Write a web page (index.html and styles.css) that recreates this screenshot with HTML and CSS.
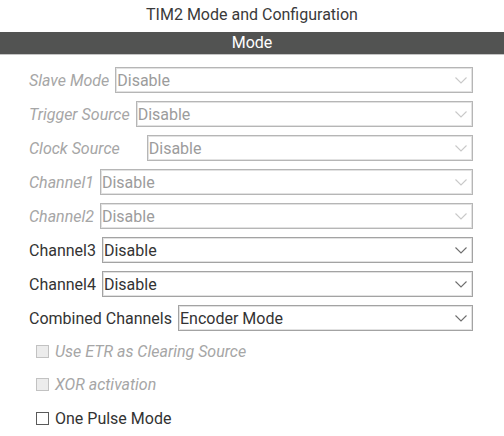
FILE: index.html
```html
<!DOCTYPE html>
<html lang="en">
<head>
  <meta charset="UTF-8">
  <title>TIM2 Mode and Configuration</title>
  <link rel="stylesheet" href="styles.css">
</head>
<body>
  <div class="title">TIM2 Mode and Configuration</div>
  <div class="bar">Mode</div>

  <div class="form">
    <div class="row off">
      <span class="label">Slave Mode</span>
      <div class="select">Disable<svg class="chev" viewBox="0 0 12 7"><path d="M0.5 0.5 L6 6 L11.5 0.5"/></svg></div>
    </div>
    <div class="row off">
      <span class="label">Trigger Source</span>
      <div class="select">Disable<svg class="chev" viewBox="0 0 12 7"><path d="M0.5 0.5 L6 6 L11.5 0.5"/></svg></div>
    </div>
    <div class="row off">
      <span class="label wide">Clock Source</span>
      <div class="select">Disable<svg class="chev" viewBox="0 0 12 7"><path d="M0.5 0.5 L6 6 L11.5 0.5"/></svg></div>
    </div>
    <div class="row off">
      <span class="label">Channel1</span>
      <div class="select">Disable<svg class="chev" viewBox="0 0 12 7"><path d="M0.5 0.5 L6 6 L11.5 0.5"/></svg></div>
    </div>
    <div class="row off">
      <span class="label">Channel2</span>
      <div class="select">Disable<svg class="chev" viewBox="0 0 12 7"><path d="M0.5 0.5 L6 6 L11.5 0.5"/></svg></div>
    </div>
    <div class="row">
      <span class="label">Channel3</span>
      <div class="select">Disable<svg class="chev" viewBox="0 0 12 7"><path d="M0.5 0.5 L6 6 L11.5 0.5"/></svg></div>
    </div>
    <div class="row">
      <span class="label">Channel4</span>
      <div class="select">Disable<svg class="chev" viewBox="0 0 12 7"><path d="M0.5 0.5 L6 6 L11.5 0.5"/></svg></div>
    </div>
    <div class="row">
      <span class="label">Combined Channels</span>
      <div class="select">Encoder Mode<svg class="chev" viewBox="0 0 12 7"><path d="M0.5 0.5 L6 6 L11.5 0.5"/></svg></div>
    </div>

    <div class="checks">
      <div class="check off"><span class="box"></span>Use ETR as Clearing Source</div>
      <div class="check off"><span class="box"></span>XOR activation</div>
      <div class="check"><span class="box"></span>One Pulse Mode</div>
    </div>
  </div>
</body>
</html>
```

FILE: styles.css
```css
body {
  margin: 0;
  font-family: Roboto, 'Liberation Sans', sans-serif;
  font-size: 16px;
  color: #333;
  background: #fff;
}

.title {
  height: 32px;
  line-height: 30px;
  text-align: center;
  color: #3a3a3a;
}

.bar {
  height: 22px;
  line-height: 22px;
  background: #525352;
  border-bottom: 1px solid #c4c4c4;
  color: #fff;
  text-align: center;
}

.form {
  padding: 12px 31px 0 29px;
}

.row {
  display: flex;
  align-items: center;
  height: 26px;
  margin-bottom: 8px;
}

.label {
  margin-right: 6px;
  white-space: nowrap;
}

.label.wide {
  margin-right: 27px;
}

.select {
  flex: 1;
  height: 26px;
  box-sizing: border-box;
  border: 1px solid #a3a3a3;
  box-shadow: inset 0 0 0 1px #e2e2e2;
  display: flex;
  align-items: center;
  justify-content: space-between;
  padding: 0 5px 0 1px;
  color: #333;
}

.chev {
  width: 12px;
  height: 7px;
  fill: none;
  stroke: #6e6e6e;
  stroke-width: 1.1;
}

.off .label {
  font-style: italic;
  color: #a6a6a6;
}

.off .select {
  color: #9c9c9c;
  border-color: #b6b6b6;
}

.off .chev {
  stroke: #c9c9c9;
}

.checks {
  padding-left: 7px;
  margin-top: 10px;
}

.check {
  display: flex;
  align-items: center;
  height: 20px;
  margin-bottom: 13.5px;
}

.box {
  width: 13px;
  height: 13px;
  box-sizing: border-box;
  border: 1px solid #5a5a5a;
  background: #fff;
  margin-right: 6px;
}

.check.off {
  font-style: italic;
  color: #a6a6a6;
}

.check.off .box {
  border-color: #c2c2c2;
  background: #ececec;
}
```
